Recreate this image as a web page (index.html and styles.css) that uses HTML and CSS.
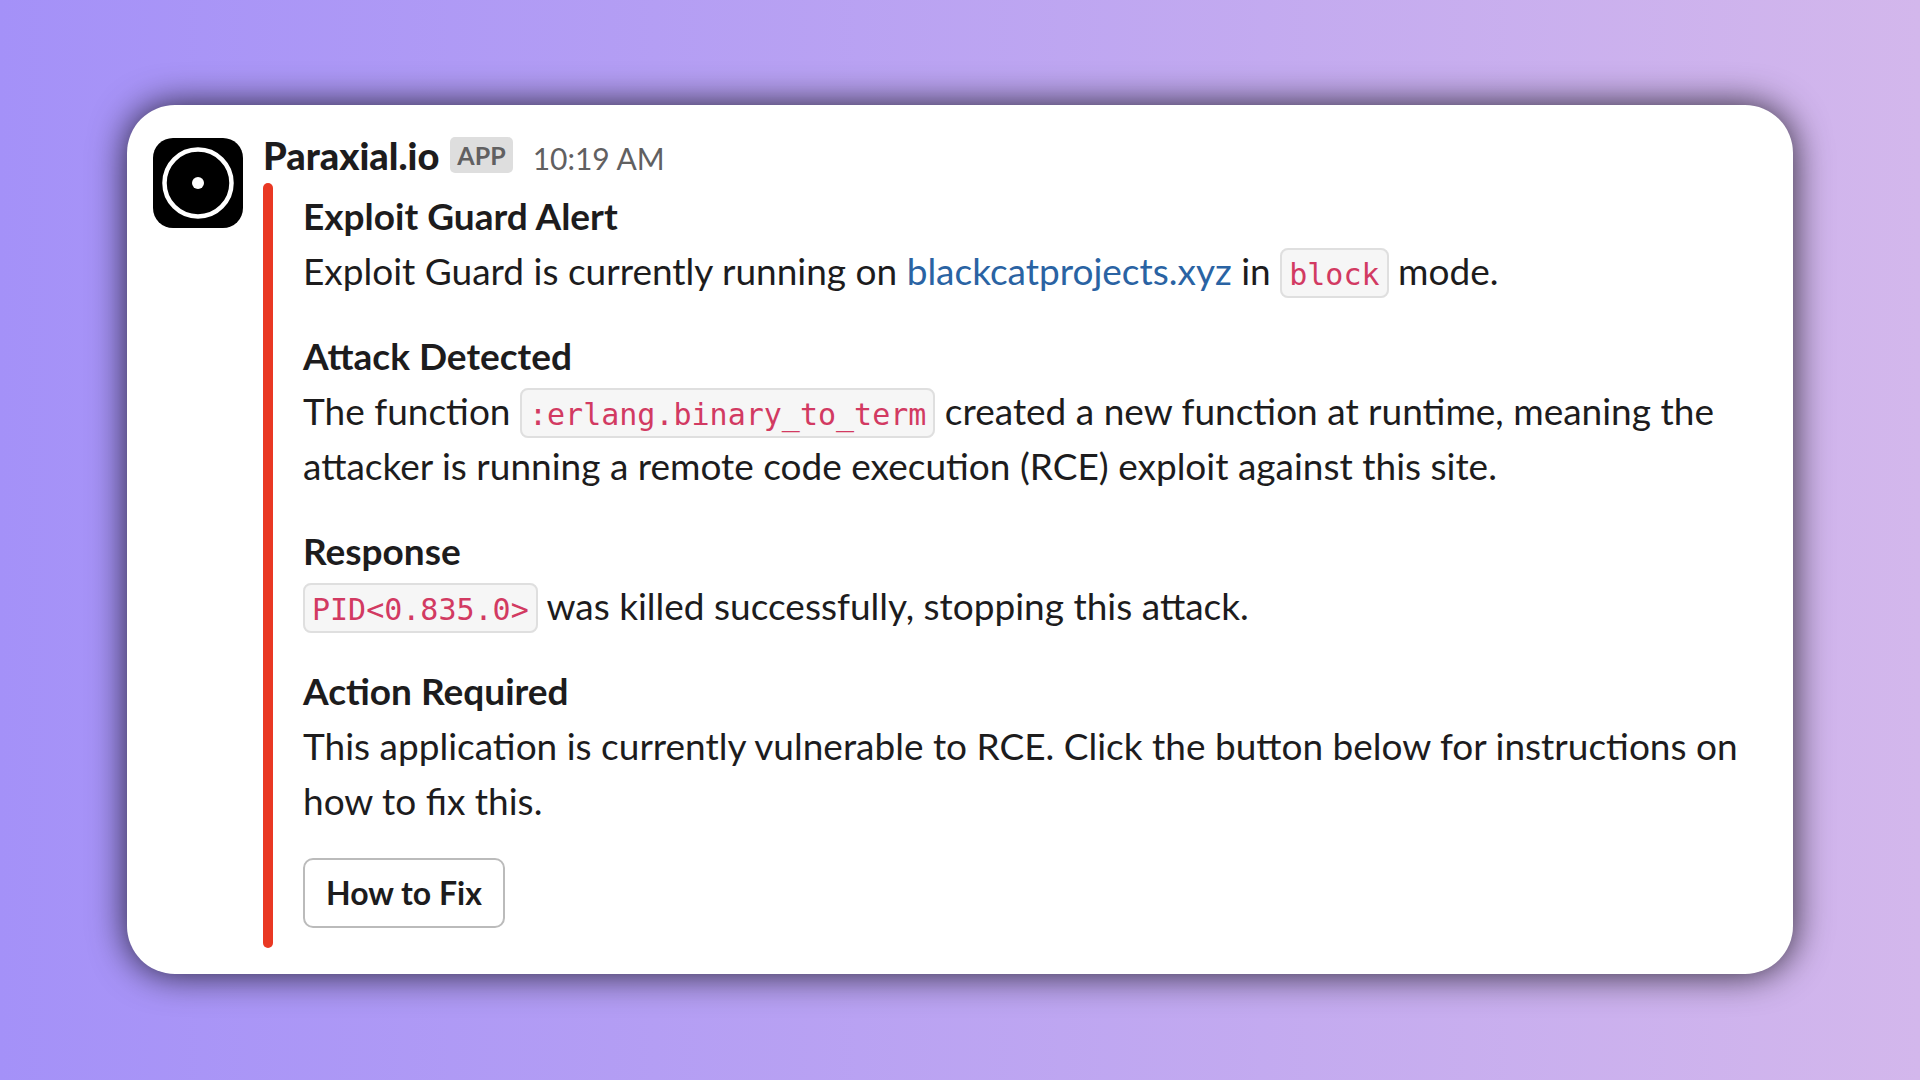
FILE: index.html
```html
<!DOCTYPE html>
<html lang="en">
<head>
  <meta charset="utf-8">
  <meta name="viewport" content="width=device-width, initial-scale=1">
  <title>Paraxial.io alert</title>
  <link rel="stylesheet" href="styles.css">
</head>
<body>
  <main class="page">
    <article class="message">
      <svg class="avatar" viewBox="0 0 90 90" aria-hidden="true">
        <rect width="90" height="90" rx="20" fill="#000"/>
        <circle cx="45" cy="45" r="33.5" fill="none" stroke="#fff" stroke-width="4.5"/>
        <circle cx="45" cy="45" r="6" fill="#fff"/>
      </svg>
      <div class="content">
        <header class="meta">
          <span class="sender">Paraxial.io</span>
          <span class="badge">APP</span>
          <time class="time" datetime="10:19">10:19 AM</time>
        </header>
        <div class="attachment">
          <section>
            <h2 class="heading">Exploit Guard Alert</h2>
            <p class="text">Exploit Guard is currently running on <a class="link" href="#">blackcatprojects.xyz</a> in <code class="code">block</code> mode.</p>
          </section>
          <section>
            <h2 class="heading">Attack Detected</h2>
            <p class="text">The function <code class="code">:erlang.binary_to_term</code> created a new function at runtime, meaning the attacker is running a remote code execution (RCE) exploit against this site.</p>
          </section>
          <section>
            <h2 class="heading">Response</h2>
            <p class="text"><code class="code">PID&lt;0.835.0&gt;</code> was killed successfully, stopping this attack.</p>
          </section>
          <section>
            <h2 class="heading">Action Required</h2>
            <p class="text">This application is currently vulnerable to RCE. Click the button below for instructions on how to fix this.</p>
          </section>
          <button class="button" type="button">How to Fix</button>
        </div>
      </div>
    </article>
  </main>
</body>
</html>
```

FILE: styles.css
```css
* {
  box-sizing: border-box;
}

body {
  margin: 0;
  font-family: Lato, "Liberation Sans", sans-serif;
  color: #1d1c1d;
}

.page {
  display: flex;
  align-items: center;
  min-height: 100vh;
  padding: 48px 127px 49px;
  background: linear-gradient(90deg, #a491f8, #d3b7ec);
}

.message {
  flex: 1;
  display: flex;
  align-items: flex-start;
  gap: 20px;
  padding: 26px 30px 26px 26px;
  border-radius: 48px;
  background: #fff;
  box-shadow: 0 0 36px rgba(0, 0, 0, 0.8);
}

.avatar {
  flex: none;
  width: 90px;
  height: 90px;
  margin-top: 7px;
}

.content {
  flex: 1;
  min-width: 0;
}

.meta {
  display: flex;
  align-items: baseline;
  height: 52px;
  line-height: 48px;
}

.sender {
  font-size: 38px;
  font-weight: 900;
}

.badge {
  align-self: flex-start;
  margin: 6px 20px 0 11px;
  padding: 0 7px;
  border-radius: 5px;
  background: #dedede;
  color: #616061;
  font-size: 25px;
  font-weight: 700;
  line-height: 36px;
}

.time {
  color: #616061;
  font-size: 30px;
}

.attachment {
  position: relative;
  display: flex;
  flex-direction: column;
  align-items: flex-start;
  gap: 30px;
  padding: 5px 0 20px 40px;
}

.attachment::before {
  content: "";
  position: absolute;
  inset: 0 auto 0 0;
  width: 10px;
  border-radius: 5px;
  background: #e93823;
}

.heading,
.text {
  margin: 0;
  font-size: 37px;
  line-height: 55px;
}

.heading {
  font-weight: 700;
}

.link {
  color: #2a63a3;
  text-decoration: none;
}

.code {
  padding: 7px 7px 4px;
  border: 2px solid #dfdfdf;
  border-radius: 8px;
  background: #f6f6f6;
  color: #d23a62;
  font-family: "DejaVu Sans Mono", "Liberation Mono", monospace;
  font-size: 30px;
  line-height: 36px;
}

.button {
  height: 70px;
  padding: 0 21px 2px;
  border: 2px solid #bbb;
  border-radius: 10px;
  background: #fff;
  color: #1d1c1d;
  font-family: inherit;
  font-size: 32px;
  font-weight: 700;
}
```
